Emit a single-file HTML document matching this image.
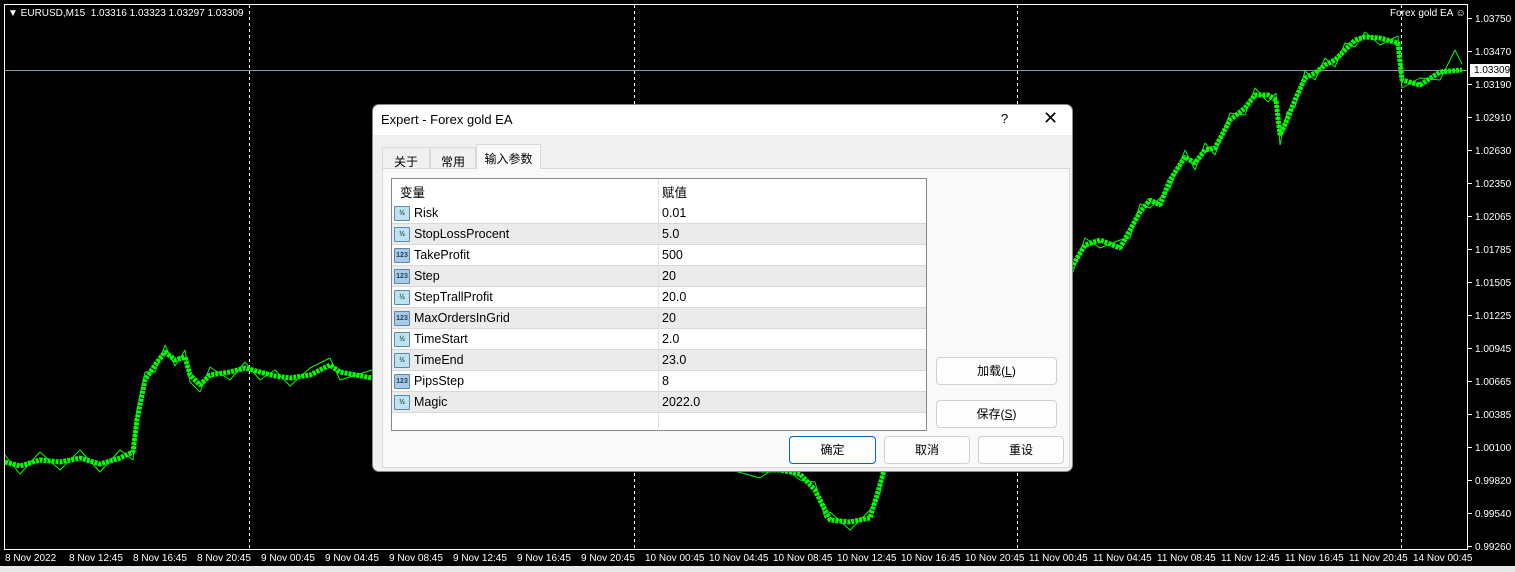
<!DOCTYPE html>
<html><head><meta charset="utf-8">
<style>
*{margin:0;padding:0;box-sizing:border-box}
body{width:1515px;height:572px;background:#000;overflow:hidden;position:relative;font-family:"Liberation Sans","Noto Sans CJK SC",sans-serif}
svg{position:absolute;left:0;top:0}
.dlg{position:absolute;left:372px;top:104px;width:701px;height:368px;background:#f0f0f0;border-radius:7px;overflow:hidden;border:1px solid #888}
.title{height:30px;background:#fff;font-size:13px;color:#000;padding:7px 0 0 8px}
.q{position:absolute;left:628px;top:6px;font-size:13px}
.x{position:absolute;left:670px;top:3px;font-size:18px;font-weight:300}
.tab{position:absolute;top:40px;height:24px;font-size:12px;padding:5px 0 0 0;text-align:center;border:1px solid #d9d9d9;border-bottom:none;background:#f0f0f0}
.panel{position:absolute;left:9px;top:63px;width:688px;height:300px;border:1px solid #d9d9d9;background:#f9f9f9}
.tbl{position:absolute;left:18px;top:73px;width:536px;height:253px;background:#fff;border:1px solid #828790}
.row{position:absolute;left:0;width:534px;height:21px;font-size:12.5px;border-bottom:1px solid #d8d8d8}
.row.alt{background:#ebebeb}
.row .n{position:absolute;left:22px;top:3px}
.row .v{position:absolute;left:270px;top:3px}
.row .ic{position:absolute;left:2px;top:3px;width:16px;height:15px;border:1px solid #5a8aa8;background:#bfe3ee;font-size:7px;font-weight:bold;color:#245;text-align:center;line-height:13px;border-radius:1px}
.row .ic.i{background:#a9c9e8}
.div{position:absolute;left:266px;top:0;width:1px;height:252px;background:#e0e0e0}
.btn{position:absolute;height:28px;background:#fdfdfd;border:1px solid #d0d0d0;border-radius:4px;font-size:12px;text-align:center;line-height:26px;color:#000}
.ax{position:absolute;color:#fff;font-size:10px;white-space:nowrap;line-height:12px}
</style></head><body>
<svg width="1515" height="572" xmlns="http://www.w3.org/2000/svg">
<rect x="0" y="566" width="1515" height="6" fill="#e8e8e8"/>
<rect x="4.5" y="4.5" width="1463" height="545" fill="none" stroke="#fff"/>
<g stroke="#fff" stroke-dasharray="3,3">
<line x1="249.5" y1="5" x2="249.5" y2="549"/><line x1="634.5" y1="5" x2="634.5" y2="549"/><line x1="1017.5" y1="5" x2="1017.5" y2="549"/><line x1="1401.5" y1="5" x2="1401.5" y2="549"/>
</g>
<line x1="5" y1="70.5" x2="1467" y2="70.5" stroke="#8a98a8"/>
<g fill="none" stroke="#00ff00" stroke-linejoin="bevel">
<polyline stroke-width="5" stroke-dasharray="3,1" points="5,462 20,466 40,460 60,462 80,458 100,464 120,458 133,452 137,420 142,395 145,380 155,365 165,352 175,360 185,357 190,375 200,385 210,375 230,372 245,368 260,372 275,376 290,378 310,375 330,365 340,372 372,378 760,470 780,470 800,474 815,490 825,510 830,520 850,522 870,518 880,485 884,470 1073,265 1085,245 1100,240 1120,248 1130,230 1140,212 1150,200 1160,205 1170,180 1185,157 1195,163 1205,150 1215,148 1230,120 1245,108 1255,95 1268,95 1276,100 1280,135 1287,120 1295,100 1305,78 1315,73 1325,65 1335,60 1345,50 1355,40 1365,37 1380,38 1398,43 1402,80 1420,85 1440,72 1462,70"/>
<polyline stroke-width="1" points="5,455 20,474 40,452 60,470 80,450 100,472 120,450 133,460 137,410 145,372 155,372 165,345 175,366 185,350 190,382 200,392 210,367 230,380 245,362 260,380 275,370 290,386 310,368 330,358 340,380 372,370 760,478 780,464 800,480 815,482 825,518 830,512 850,530 870,510 880,493 884,462 1073,272 1085,238 1100,248 1120,240 1130,238 1140,204 1150,208 1160,198 1170,188 1185,150 1195,170 1205,143 1215,155 1230,113 1245,115 1255,88 1268,102 1276,93 1280,145 1287,112 1295,107 1305,71 1315,80 1325,58 1335,67 1345,43 1355,47 1365,32 1380,45 1398,36 1402,88 1420,78 1440,80 1455,50 1462,64"/>
</g>
<g stroke="#fff">
<line x1="1468" y1="18.5" x2="1472" y2="18.5"/><line x1="1468" y1="51.5" x2="1472" y2="51.5"/><line x1="1468" y1="84.5" x2="1472" y2="84.5"/><line x1="1468" y1="117.5" x2="1472" y2="117.5"/><line x1="1468" y1="150.5" x2="1472" y2="150.5"/><line x1="1468" y1="183.5" x2="1472" y2="183.5"/><line x1="1468" y1="216.5" x2="1472" y2="216.5"/><line x1="1468" y1="249.5" x2="1472" y2="249.5"/><line x1="1468" y1="282.5" x2="1472" y2="282.5"/><line x1="1468" y1="315.5" x2="1472" y2="315.5"/><line x1="1468" y1="348.5" x2="1472" y2="348.5"/><line x1="1468" y1="381.5" x2="1472" y2="381.5"/><line x1="1468" y1="414.5" x2="1472" y2="414.5"/><line x1="1468" y1="447.5" x2="1472" y2="447.5"/><line x1="1468" y1="480.5" x2="1472" y2="480.5"/><line x1="1468" y1="513.5" x2="1472" y2="513.5"/><line x1="1468" y1="546.5" x2="1472" y2="546.5"/>
</g>
<rect x="1470" y="64" width="40" height="13" fill="#fff"/>
</svg>
<div class="ax" style="left:8px;top:8px">&#9660; EURUSD,M15&nbsp; 1.03316 1.03323 1.03297 1.03309</div>
<div class="ax" style="left:1390px;top:8px">Forex gold EA &#9786;</div>
<div class="ax" style="left:1475px;top:14px">1.03750</div>
<div class="ax" style="left:1475px;top:47px">1.03470</div>
<div class="ax" style="left:1474px;top:65px;color:#000">1.03309</div>
<div class="ax" style="left:1475px;top:80px">1.03190</div>
<div class="ax" style="left:1475px;top:113px">1.02910</div>
<div class="ax" style="left:1475px;top:146px">1.02630</div>
<div class="ax" style="left:1475px;top:179px">1.02350</div>
<div class="ax" style="left:1475px;top:212px">1.02065</div>
<div class="ax" style="left:1475px;top:245px">1.01785</div>
<div class="ax" style="left:1475px;top:278px">1.01505</div>
<div class="ax" style="left:1475px;top:311px">1.01225</div>
<div class="ax" style="left:1475px;top:344px">1.00945</div>
<div class="ax" style="left:1475px;top:377px">1.00665</div>
<div class="ax" style="left:1475px;top:410px">1.00385</div>
<div class="ax" style="left:1475px;top:443px">1.00100</div>
<div class="ax" style="left:1475px;top:476px">0.99820</div>
<div class="ax" style="left:1475px;top:509px">0.99540</div>
<div class="ax" style="left:1475px;top:542px">0.99260</div>
<div class="ax" style="left:5px;top:553px">8 Nov 2022</div>
<div class="ax" style="left:69px;top:553px">8 Nov 12:45</div>
<div class="ax" style="left:133px;top:553px">8 Nov 16:45</div>
<div class="ax" style="left:197px;top:553px">8 Nov 20:45</div>
<div class="ax" style="left:261px;top:553px">9 Nov 00:45</div>
<div class="ax" style="left:325px;top:553px">9 Nov 04:45</div>
<div class="ax" style="left:389px;top:553px">9 Nov 08:45</div>
<div class="ax" style="left:453px;top:553px">9 Nov 12:45</div>
<div class="ax" style="left:517px;top:553px">9 Nov 16:45</div>
<div class="ax" style="left:581px;top:553px">9 Nov 20:45</div>
<div class="ax" style="left:645px;top:553px">10 Nov 00:45</div>
<div class="ax" style="left:709px;top:553px">10 Nov 04:45</div>
<div class="ax" style="left:773px;top:553px">10 Nov 08:45</div>
<div class="ax" style="left:837px;top:553px">10 Nov 12:45</div>
<div class="ax" style="left:901px;top:553px">10 Nov 16:45</div>
<div class="ax" style="left:965px;top:553px">10 Nov 20:45</div>
<div class="ax" style="left:1029px;top:553px">11 Nov 00:45</div>
<div class="ax" style="left:1093px;top:553px">11 Nov 04:45</div>
<div class="ax" style="left:1157px;top:553px">11 Nov 08:45</div>
<div class="ax" style="left:1221px;top:553px">11 Nov 12:45</div>
<div class="ax" style="left:1285px;top:553px">11 Nov 16:45</div>
<div class="ax" style="left:1349px;top:553px">11 Nov 20:45</div>
<div class="ax" style="left:1413px;top:553px">14 Nov 00:45</div>
<div class="dlg">
 <div class="title">Expert - Forex gold EA</div>
 <div class="q">?</div><div class="x">&#10005;</div>
 <div class="tab" style="left:9px;width:48px;top:42px">关于</div>
 <div class="tab" style="left:57px;width:46px;top:42px">常用</div>
 <div class="panel"></div>
 <div class="tab" style="left:103px;width:65px;top:39px;height:25px;background:#f9f9f9;z-index:2">输入参数</div>
 <div class="tbl">
  <div class="row" style="top:0;height:24px;border-bottom:none"><span class="n" style="left:8px;top:3px">变量</span><span class="v" style="top:3px">赋值</span></div>
  <div class="row" style="top:24px"><div class="ic">½</div><span class="n">Risk</span><span class="v">0.01</span></div>
  <div class="row alt" style="top:45px"><div class="ic">½</div><span class="n">StopLossProcent</span><span class="v">5.0</span></div>
  <div class="row" style="top:66px"><div class="ic i">123</div><span class="n">TakeProfit</span><span class="v">500</span></div>
  <div class="row alt" style="top:87px"><div class="ic i">123</div><span class="n">Step</span><span class="v">20</span></div>
  <div class="row" style="top:108px"><div class="ic">½</div><span class="n">StepTrallProfit</span><span class="v">20.0</span></div>
  <div class="row alt" style="top:129px"><div class="ic i">123</div><span class="n">MaxOrdersInGrid</span><span class="v">20</span></div>
  <div class="row" style="top:150px"><div class="ic">½</div><span class="n">TimeStart</span><span class="v">2.0</span></div>
  <div class="row alt" style="top:171px"><div class="ic">½</div><span class="n">TimeEnd</span><span class="v">23.0</span></div>
  <div class="row" style="top:192px"><div class="ic i">123</div><span class="n">PipsStep</span><span class="v">8</span></div>
  <div class="row alt" style="top:213px"><div class="ic">½</div><span class="n">Magic</span><span class="v">2022.0</span></div>
  <div class="div"></div>
 </div>
 <div class="btn" style="left:563px;top:252px;width:121px">加载(<u>L</u>)</div>
 <div class="btn" style="left:563px;top:295px;width:121px">保存(<u>S</u>)</div>
 <div class="btn" style="left:416px;top:331px;width:87px;border:1px solid #0067c0">确定</div>
 <div class="btn" style="left:511px;top:331px;width:86px">取消</div>
 <div class="btn" style="left:605px;top:331px;width:86px">重设</div>
</div>
</body></html>
